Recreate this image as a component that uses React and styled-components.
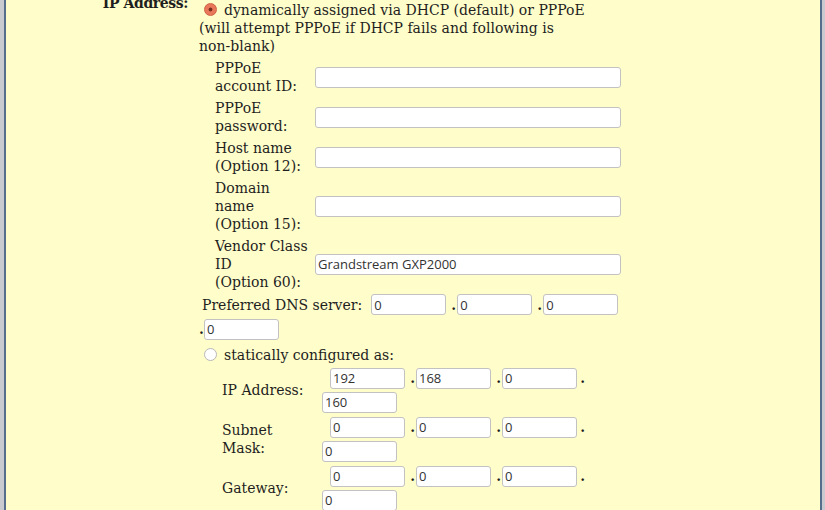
import React from 'react'
import styled, { createGlobalStyle } from 'styled-components'

const GlobalStyle = createGlobalStyle`
  html, body { margin: 0; padding: 0; }
  body {
    font-family: "DejaVu Serif", serif;
    font-size: 14px;
    line-height: 18px;
    color: #1e1e1e;
  }
`

const Frame = styled.div`
  height: 510px;
  overflow: hidden;
  background: #c9cacf;
  padding: 0 3px 0 4px;
`

const Panel = styled.div`
  height: 100%;
  background: #fffdca;
  border-left: 2px solid #566d8c;
  border-right: 2px solid #566d8c;
  overflow: hidden;
`

const Section = styled.div`
  display: grid;
  grid-template-columns: 193px 1fr;
  margin-top: 1px;
`

const MainLabel = styled.div`
  font-weight: bold;
  text-align: right;
  padding-right: 11px;
  margin-top: -7px;
  letter-spacing: -0.4px;
`

const Content = styled.div`
  width: 425px;
`

const Choice = styled.label`
  display: block;
  max-width: 400px;
  margin-top: ${p => p.$top || 0}px;
`

const NoWrap = styled.span`
  white-space: nowrap;
`

const Radio = styled.input.attrs({ type: 'radio' })`
  appearance: none;
  width: 13px;
  height: 13px;
  margin: 0 7px 0 5px;
  vertical-align: -1px;
  border-radius: 50%;
  border: 1px solid #b8b8b8;
  background: #fff;
  box-sizing: border-box;
  &:checked {
    border-color: #cf5f42;
    background: radial-gradient(circle, #7a2e1e 0 1.6px, #e9785b 2.3px);
  }
`

const SubGrid = styled.div`
  display: grid;
  grid-template-columns: ${p => p.$label}px auto;
  row-gap: ${p => p.$gap}px;
  margin: ${p => p.$top}px 0 0 ${p => p.$left}px;
  align-items: center;
`

const SubLabel = styled.div``

const Field = styled.input`
  box-sizing: border-box;
  width: ${p => p.$w || 75}px;
  height: 21px;
  margin: 0;
  padding: 0 2px;
  border: 1px solid #c2c2c2;
  border-radius: 3px;
  background: #fff;
  font-family: "Open Sans", sans-serif;
  font-size: 13px;
  color: #333;
  outline: none;
  flex: none;
`

const IpLine = styled.div`
  display: flex;
  align-items: center;
  height: ${p => p.$h || 24}px;
  padding-left: ${p => p.$indent || 0}px;
  margin-top: ${p => p.$top || 0}px;
`

const Dot = styled.span`
  font-weight: bold;
  width: ${p => p.$w || 11}px;
  text-align: right;
  padding-right: 1px;
  box-sizing: border-box;
  flex: none;
`

const DnsText = styled.span`
  padding-left: 3px;
  margin-right: 9px;
  white-space: nowrap;
`

const pppoe = [
  { label: ['PPPoE', 'account ID:'], value: '' },
  { label: ['PPPoE', 'password:'], value: '' },
  { label: ['Host name', '(Option 12):'], value: '' },
  { label: ['Domain', 'name', '(Option 15):'], value: '' },
  { label: ['Vendor Class', 'ID', '(Option 60):'], value: 'Grandstream GXP2000' },
]

const statics = [
  { label: ['IP Address:'], ip: ['192', '168', '0', '160'] },
  { label: ['Subnet', 'Mask:'], ip: ['0', '0', '0', '0'] },
  { label: ['Gateway:'], ip: ['0', '0', '0', '0'] },
]

function IpBlock({ ip }) {
  return (
    <div>
      <IpLine $indent={8}>
        <Field defaultValue={ip[0]} />
        <Dot>.</Dot>
        <Field defaultValue={ip[1]} />
        <Dot>.</Dot>
        <Field defaultValue={ip[2]} />
        <Dot $w={9}>.</Dot>
      </IpLine>
      <IpLine>
        <Field defaultValue={ip[3]} />
      </IpLine>
    </div>
  )
}

export default function App() {
  return (
    <Frame>
      <GlobalStyle />
      <Panel>
        <Section>
          <MainLabel>IP Address:</MainLabel>
          <Content>
            <Choice>
              <Radio name="ip" defaultChecked />
              dynamically assigned via DHCP (default) or PPPoE (will attempt PPPoE if DHCP fails and following is <NoWrap>non-blank)</NoWrap>
            </Choice>
            <SubGrid $label={100} $gap={4} $top={4} $left={16}>
              {pppoe.map((r, i) => (
                <React.Fragment key={i}>
                  <SubLabel>
                    {r.label.map((l, j) => <div key={j}>{l}</div>)}
                  </SubLabel>
                  <Field $w={306} defaultValue={r.value} />
                </React.Fragment>
              ))}
            </SubGrid>
            <IpLine $h={25} $top={1}>
              <DnsText>Preferred DNS server:</DnsText>
              <Field defaultValue="0" />
              <Dot>.</Dot>
              <Field defaultValue="0" />
              <Dot>.</Dot>
              <Field defaultValue="0" />
            </IpLine>
            <IpLine $h={24}>
              <Dot $w={5}>.</Dot>
              <Field defaultValue="0" />
            </IpLine>
            <Choice $top={5}>
              <Radio name="ip" />
              statically configured as:
            </Choice>
            <SubGrid $label={100} $gap={1} $top={2} $left={23}>
              {statics.map((r, i) => (
                <React.Fragment key={i}>
                  <SubLabel>
                    {r.label.map((l, j) => <div key={j}>{l}</div>)}
                  </SubLabel>
                  <IpBlock ip={r.ip} />
                </React.Fragment>
              ))}
            </SubGrid>
          </Content>
        </Section>
      </Panel>
    </Frame>
  )
}
